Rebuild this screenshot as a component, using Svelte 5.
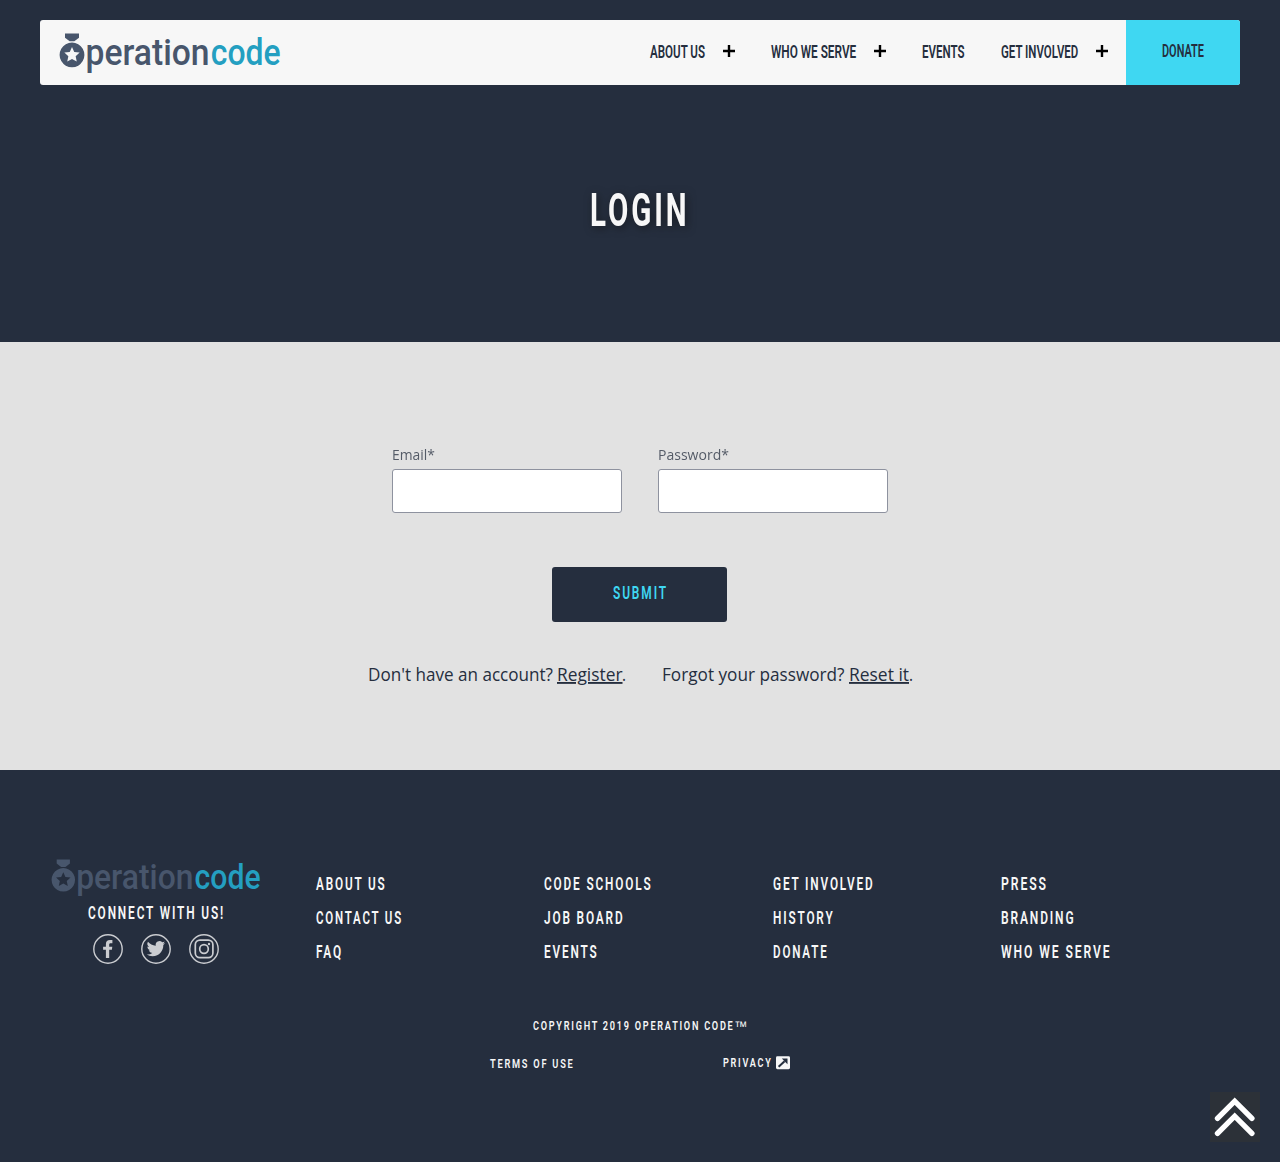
<script>
  const nav = [
    { text: 'ABOUT US', w: 55, plus: true },
    { text: 'WHO WE SERVE', w: 85.2, plus: true },
    { text: 'EVENTS', w: 42.5, plus: false },
    { text: 'GET INVOLVED', w: 77.3, plus: true }
  ];
  const columns = [
    [['ABOUT US', 70.5], ['CONTACT US', 87], ['FAQ', 27]],
    [['CODE SCHOOLS', 108.5], ['JOB BOARD', 80.5], ['EVENTS', 54.5]],
    [['GET INVOLVED', 101.5], ['HISTORY', 61.5], ['DONATE', 55.5]],
    [['PRESS', 47], ['BRANDING', 74.5], ['WHO WE SERVE', 110.5]]
  ];
</script>

<!-- Condensed lettering: text is fitted to a fixed width. -->
{#snippet fit(text, w, size, h, base, cls)}
  <svg class="fit {cls}" width={w} height={h}>
    <text x="0" y={base} font-size={size} textLength={w} lengthAdjust="spacingAndGlyphs">{text}</text>
  </svg>
{/snippet}

{#snippet logo(cls)}
  <svg class={cls} viewBox="0 0 222 40" role="img" aria-label="Operation Code">
    <path fill="#48566c" d="M6 .4h14v4.300l-4.700 3.600h-4.600L6 4.700z" />
    <path fill="#48566c" fill-rule="evenodd" d="M13 9.500a12.400 12.400 0 1 0 .01 0zM13 14l2.250 4.950 5.400.620-4 3.680 1.100 5.320L13 25.900l-4.750 2.670 1.100-5.320-4-3.680 5.400-.620z" />
    <text class="logo-a" x="26.600" y="31.500" textLength="124" lengthAdjust="spacingAndGlyphs">peration</text>
    <text class="logo-b" x="151.800" y="31.500" textLength="69.800" lengthAdjust="spacingAndGlyphs">code</text>
  </svg>
{/snippet}

<header class="hero">
  <nav class="bar">
    {@render logo('logo')}
    <div class="items">
      {#each nav as item}
        <a class="item" href="#nav">
          {@render fit(item.text, item.w, 18, 24, 19, 'din')}
          {#if item.plus}
            <svg class="plus" width="12" height="12" viewBox="0 0 12 12"><path d="M6 0v12M0 6h12" stroke="#000" stroke-width="2.400" /></svg>
          {/if}
        </a>
      {/each}
      <a class="donate" href="#donate">{@render fit('DONATE', 42, 18, 24, 18, 'din')}</a>
    </div>
  </nav>
  <h1>{@render fit('LOGIN', 99.5, 45.5, 50, 41.5, 'title')}</h1>
</header>

<main>
  <form>
    <div class="fields">
      <label>{@render fit('Email*', 43, 15.2, 20, 15, 'body soft')}<input type="email" /></label>
      <label>{@render fit('Password*', 71, 15.2, 20, 15, 'body soft')}<input type="password" /></label>
    </div>
    <button type="button">{@render fit('SUBMIT', 55, 18, 24, 17, 'spaced')}</button>
  </form>
  <div class="links">
    <p>
      {@render fit("Don't have an account?", 185, 18.6, 24, 19, 'body')}
      <a class="under" href="#register">{@render fit('Register', 65.5, 18.6, 24, 19, 'body')}</a>
      {@render fit('.', 4, 18.6, 24, 19, 'body')}
    </p>
    <p>
      {@render fit('Forgot your password?', 182.5, 18.6, 24, 19, 'body')}
      <a class="under" href="#reset">{@render fit('Reset it', 60, 18.6, 24, 19, 'body')}</a>
      {@render fit('.', 4, 18.6, 24, 19, 'body')}
    </p>
  </div>
</main>

<footer>
  <div class="top">
    <div class="brand">
      {@render logo('logo-small')}
      {@render fit('CONNECT WITH US!', 137, 18, 24, 19, 'spaced')}
      <div class="social">
        <svg width="30" height="30" viewBox="0 0 30 30">
          <circle cx="15" cy="15" r="14.200" />
          <path d="M12.900 24v-8.200h-2.800v-3.100h2.800v-2.400c0-2.800 1.500-4.200 4.100-4.200h2.400v3.100h-1.700c-1.200 0-1.500.5-1.500 1.500v2h3.100l-.4 3.100h-2.700V24z" />
        </svg>
        <svg width="30" height="30" viewBox="0 0 30 30">
          <circle cx="15" cy="15" r="14.200" />
          <path transform="translate(5.700 5.400) scale(.77)" d="M23.950 4.570a10 10 0 0 1-2.820.770 4.960 4.960 0 0 0 2.160-2.720c-.950.550-2 .950-3.130 1.180a4.920 4.920 0 0 0-8.380 4.480C7.690 8.090 4.070 6.130 1.640 3.160a4.920 4.920 0 0 0 1.520 6.570 4.900 4.900 0 0 1-2.230-.610v.060a4.920 4.920 0 0 0 3.950 4.830 5 5 0 0 1-2.210.080 4.940 4.940 0 0 0 4.600 3.420A9.870 9.870 0 0 1 0 19.540a13.990 13.990 0 0 0 7.550 2.210c9.050 0 14-7.500 14-13.980 0-.210 0-.420-.020-.630a9.940 9.940 0 0 0 2.420-2.570z" />
        </svg>
        <svg width="30" height="30" viewBox="0 0 30 30">
          <circle cx="15" cy="15" r="14.200" />
          <rect class="line" x="6.300" y="6.100" width="17.600" height="17.600" rx="4.600" />
          <circle class="line" cx="15" cy="15" r="4.300" />
          <circle class="dot" cx="20" cy="10" r="1.200" />
        </svg>
      </div>
    </div>
    <div class="columns">
      {#each columns as column}
        <ul>
          {#each column as [text, w]}
            <li>{@render fit(text, w, 18, 24, 19, 'spaced')}</li>
          {/each}
        </ul>
      {/each}
    </div>
  </div>
  <div class="copy">
    {@render fit('COPYRIGHT 2019 OPERATION CODE', 201.5, 13.6, 18, 14, 'spaced small')}
    {@render fit('™', 13, 14, 18, 14.5, 'tm')}
  </div>
  <div class="legal">
    {@render fit('TERMS OF USE', 84.5, 13.6, 18, 14, 'spaced small')}
    <div class="privacy">
      {@render fit('PRIVACY', 49.5, 13.6, 18, 12.6, 'spaced small')}
      <svg width="14" height="14" viewBox="0 0 14 14">
        <rect y=".200" width="14" height="13" rx="1.400" fill="#f7f7f7" />
        <path d="M2.600 10.800l6-5.600" stroke="#252e3e" stroke-width="2" fill="none" />
        <path d="M5.800 2.500h5.700v5.700z" fill="#252e3e" />
      </svg>
    </div>
  </div>
</footer>

<button class="to-top" type="button" aria-label="Scroll to top">
  <svg width="50" height="50" viewBox="0 0 50 50"><path d="M7.500 26.400L24.700 9.200l17.200 17.200M7.500 41.400l17.200-17.200 17.200 17.200" /></svg>
</button>

<style>
  :global(body) { margin: 0; background: #252e3e; }
  :global(*) { box-sizing: border-box; }
  a { color: inherit; text-decoration: none; }
  .fit { display: block; overflow: visible; flex: none; fill: currentColor; }
  .din { font-family: Roboto, sans-serif; font-weight: 600; }
  .title { font-family: Roboto, sans-serif; font-weight: 700; letter-spacing: 4.5px; }
  .spaced { font-family: Roboto, sans-serif; font-weight: 600; letter-spacing: 2.8px; }
  .small { letter-spacing: 2.6px; }
  .tm { font-family: 'Liberation Sans', sans-serif; }
  .body { font-family: 'Open Sans', 'Noto Sans', sans-serif; font-weight: 400; }
  .soft { opacity: .75; }

  .hero { height: 342px; padding: 20px 40px 0; color: #252e3e; background: #252e3e; }
  .bar { height: 65px; display: flex; justify-content: space-between; padding-left: 19px; background: #f7f7f7; border-radius: 3px; overflow: hidden; }
  .logo, .logo-small { display: block; overflow: visible; }
  .logo { width: 222px; height: 40px; margin-top: 13px; }
  .logo-a, .logo-b { font-family: Roboto, sans-serif; font-size: 37px; font-weight: 500; fill: #48566c; }
  .logo-b { fill: #249fc1; }
  .items { display: flex; }
  .item { display: flex; gap: 18px; padding: 19px 18px 0; }
  .item .plus { margin-top: 6px; }
  .donate { width: 114px; padding: 19px 36px 0; background: #3fd7f2; }
  h1 { display: flex; justify-content: center; margin: 99px 0 0; color: #f7f7f7; filter: drop-shadow(2px 2px 4px rgba(20, 22, 26, .8)); }

  main { height: 428px; padding-top: 100px; background: #e2e2e2; color: #252e3e; }
  form { display: flex; flex-direction: column; align-items: center; }
  .fields { display: flex; gap: 36px; }
  label { display: flex; flex-direction: column; gap: 4px; padding-top: 3px; }
  input { width: 230px; height: 44px; border: 1px solid #8e929f; border-radius: 3px; background: #fff; outline: 0; }
  form button { display: flex; justify-content: center; width: 175px; height: 55px; margin: 54px 1px 0 0; padding: 15px 0 0 1px; border: 0; border-radius: 3px; background: #252e3e; color: #3fd7f2; }
  .links { display: flex; justify-content: center; gap: 36px; margin-top: 40px; }
  .links p { display: flex; margin: 0; }
  .under { margin-left: 4px; }
  .under :global(text) { text-decoration: underline; text-decoration-thickness: 1px; }

  footer { height: 392px; padding: 89px 51px 0; color: #f7f7f7; background: #252e3e; }
  .top { display: flex; height: 107px; }
  .brand { width: 210px; display: flex; flex-direction: column; align-items: center; }
  .logo-small { width: 210px; height: 38px; margin-bottom: 3px; }
  .social { display: flex; gap: 18px; margin-top: 10px; }
  .social svg { fill: #cbcdd1; }
  .social circle { fill: none; stroke: #cbcdd1; stroke-width: 1.4; }
  .social .line { fill: none; stroke: #cbcdd1; stroke-width: 1.7; }
  .social .dot { fill: #cbcdd1; stroke: none; }
  .columns { display: grid; grid-template-columns: repeat(4, 228.5px); margin: 12px 0 0 54.6px; }
  ul { display: grid; align-content: start; gap: 10px; margin: 0; padding: 0; list-style: none; }
  .copy { display: flex; justify-content: center; margin-top: 50px; }
  .legal { display: flex; justify-content: center; gap: 148px; margin-top: 20px; }
  .privacy { display: flex; gap: 3.5px; }
  .privacy svg:last-child { margin-top: 2px; }
  .to-top { position: fixed; right: 20px; bottom: 20px; width: 50px; height: 50px; padding: 0; border: 0; background: #2c3138; }
  .to-top svg { display: block; }
  .to-top path { fill: none; stroke: #fff; stroke-width: 5.4; stroke-linecap: round; }
</style>
